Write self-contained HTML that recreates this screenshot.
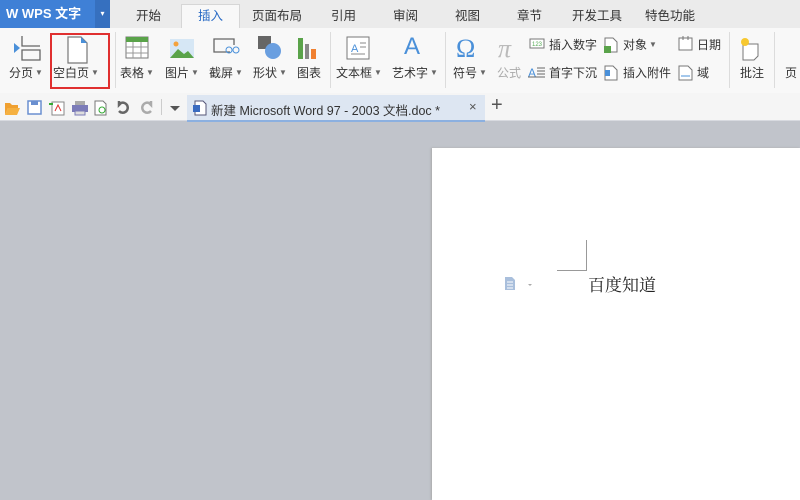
<!DOCTYPE html>
<html><head><meta charset="utf-8"><style>
*{margin:0;padding:0;box-sizing:border-box}
body{width:800px;height:500px;overflow:hidden;background:#c1c4cb;font-family:"Liberation Sans","Noto Sans CJK SC",sans-serif;font-size:12px;color:#333;position:relative}
.a{position:absolute;white-space:nowrap}
#tabs{left:0;top:0;width:800px;height:28px;background:#ebebeb}
#wps{left:0;top:0;width:95px;height:28px;background:#3f80d6;color:#fff;font-weight:bold;font-size:13px;line-height:28px;padding-left:6px}
#wpsa{left:95px;top:0;width:15px;height:28px;background:#3670bf;color:#fff;font-size:8px;line-height:28px;text-align:center}
.tab{top:0;height:28px;line-height:32px;font-size:12.5px;color:#333}
#ribbon{left:0;top:28px;width:800px;height:65px;background:#f8f8f8}
#qbar{left:0;top:93px;width:800px;height:28px;background:#f5f5f5;border-bottom:1px solid #d8dae0}
.lbl{top:64px;font-size:12px;color:#333}
i{font-style:normal;font-size:8px;color:#666;vertical-align:2px;margin-left:2px}
</style></head><body>
<div class="a" id="tabs"></div>
<div class="a" id="wps">W WPS 文字</div><div class="a" id="wpsa">▾</div>
<div class="a" style="left:181px;top:4px;width:59px;height:26px;background:#f8f8f8;border:1px solid #d6d6d6;border-bottom:none"></div>
<div class="a tab" style="left:136px">开始</div>
<div class="a tab" style="left:198px;color:#2a6bc5">插入</div>
<div class="a tab" style="left:252px">页面布局</div>
<div class="a tab" style="left:331px">引用</div>
<div class="a tab" style="left:393px">审阅</div>
<div class="a tab" style="left:455px">视图</div>
<div class="a tab" style="left:517px">章节</div>
<div class="a tab" style="left:572px">开发工具</div>
<div class="a tab" style="left:645px">特色功能</div>
<div class="a" id="ribbon"></div>
<svg class="a" style="left:0;top:28px" width="800" height="65">
<g fill="none" stroke="#666" stroke-width="1.3"><path d="M22 8v10h18M22 22h18v10H22z"/></g><path d="M14 15l6 5-6 5z" fill="#4a90d9"/>
<path d="M68 9h13l6 6v20H68z" fill="#fff" stroke="#777" stroke-width="1.2"/><path d="M81 9l6 6h-6z" fill="#4a90d9"/>
<rect x="126" y="9" width="22" height="21" fill="#fff" stroke="#777"/><rect x="126" y="9" width="22" height="5" fill="#5aa34a"/><path d="M126 19h22M126 25h22M133 14v16M141 14v16" stroke="#999"/>
<rect x="170" y="11" width="24" height="19" fill="#d6e7f5"/><path d="M170 30l8-9 6 5 4-3 6 7z" fill="#5aa34a"/><circle cx="176" cy="16" r="2.5" fill="#f4a23c"/>
<path d="M230 24h-16v-13h20v6" fill="none" stroke="#666" stroke-width="1.3"/><circle cx="229" cy="22" r="3" fill="none" stroke="#4a90d9"/><circle cx="236" cy="22" r="3" fill="none" stroke="#4a90d9"/>
<rect x="258" y="8" width="13" height="13" fill="#666"/><circle cx="273" cy="23" r="8" fill="#6a9fe0"/>
<rect x="298" y="10" width="5" height="21" fill="#5aa34a"/><rect x="305" y="16" width="4" height="15" fill="#888"/><rect x="311" y="21" width="5" height="10" fill="#f08030"/>
<rect x="347" y="9" width="22" height="22" fill="#fff" stroke="#777"/><text x="351" y="24" font-size="11" fill="#4a90d9" font-family="Liberation Sans">A</text><path d="M360 15h6M360 19h6M351 26h14" stroke="#888"/>
<text x="404" y="26" font-size="24" fill="#4a90d9" font-family="Liberation Sans">A</text>
<text x="456" y="29" font-size="26" fill="#4a90d9" font-family="Liberation Serif">Ω</text>
<text x="498" y="29" font-size="26" fill="#bbb" font-family="Liberation Serif" font-style="italic">π</text>
<rect x="530" y="11" width="14" height="9" fill="#fff" stroke="#777"/><text x="532" y="18" font-size="6" fill="#5a5">123</text>
<text x="528" y="49" font-size="12" fill="#4a90d9" font-family="Liberation Sans">A</text><path d="M537 40h8M537 43h8M537 46h8M528 49h17" stroke="#666"/>
<path d="M605 10h8l4 4v10h-12z" fill="#fff" stroke="#777"/><rect x="604" y="18" width="7" height="7" fill="#5aa34a"/>
<path d="M605 38h8l4 4v10h-12z" fill="#fff" stroke="#777"/><rect x="605" y="42" width="5" height="6" fill="#4a90d9"/>
<rect x="679" y="10" width="13" height="12" fill="#fff" stroke="#777"/><path d="M683 8v4M688 8v4" stroke="#777"/>
<path d="M679 38h9l4 4v10h-13z" fill="#fff" stroke="#777"/><path d="M681 48h9" stroke="#4a90d9"/>
<path d="M743 16h15v12l-4 4h-11z" fill="#fff" stroke="#777"/><circle cx="745" cy="14" r="4" fill="#f7c830"/>
<g fill="#dcdcdc"><rect x="115" y="4" width="1" height="56"/><rect x="330" y="4" width="1" height="56"/><rect x="445" y="4" width="1" height="56"/><rect x="729" y="4" width="1" height="56"/><rect x="774" y="4" width="1" height="56"/></g>
</svg>
<div class="a lbl" style="left:9px">分页<i>▼</i></div>
<div class="a lbl" style="left:53px">空白页<i>▼</i></div>
<div class="a" style="left:50px;top:33px;width:60px;height:56px;border:2px solid #e03030"></div>
<div class="a lbl" style="left:120px">表格<i>▼</i></div>
<div class="a lbl" style="left:165px">图片<i>▼</i></div>
<div class="a lbl" style="left:209px">截屏<i>▼</i></div>
<div class="a lbl" style="left:253px">形状<i>▼</i></div>
<div class="a lbl" style="left:297px">图表</div>
<div class="a lbl" style="left:336px">文本框<i>▼</i></div>
<div class="a lbl" style="left:392px">艺术字<i>▼</i></div>
<div class="a lbl" style="left:453px">符号<i>▼</i></div>
<div class="a lbl" style="left:497px;color:#aaa">公式</div>
<div class="a" style="left:549px;top:36px">插入数字</div>
<div class="a" style="left:549px;top:64px">首字下沉</div>
<div class="a" style="left:623px;top:36px">对象<i>▼</i></div>
<div class="a" style="left:623px;top:64px">插入附件</div>
<div class="a" style="left:697px;top:36px">日期</div>
<div class="a" style="left:697px;top:64px">域</div>
<div class="a lbl" style="left:740px">批注</div>
<div class="a lbl" style="left:785px">页</div>
<div class="a" id="qbar"></div>
<svg class="a" style="left:0;top:93px" width="200" height="28">
<path d="M5 10h5l2 2h6v3H8l-3 7z" fill="#f0a030"/><path d="M8 15h12l-3 7H5z" fill="#f5b040"/>
<rect x="28" y="8" width="13" height="13" fill="#fff" stroke="#6a8fd0" stroke-width="1.5"/><rect x="31" y="8" width="7" height="4" fill="#6a8fd0"/>
<rect x="52" y="9" width="12" height="13" fill="#fff" stroke="#888"/><path d="M55 18l3-6 3 6" stroke="#e03030" fill="none"/><path d="M49 11h4" stroke="#3a3" stroke-width="2"/>
<rect x="72" y="12" width="16" height="7" fill="#7b7bb8"/><rect x="75" y="8" width="10" height="4" fill="#aaa"/><rect x="75" y="18" width="10" height="4" fill="#ddd" stroke="#7b7bb8"/>
<path d="M95 8h8l3 3v11H95z" fill="#fff" stroke="#777"/><circle cx="102" cy="17" r="3" fill="none" stroke="#3a3"/>
<path d="M119 18a5 5 0 1 0 2-8l-2 2v-4" fill="none" stroke="#666" stroke-width="2.5"/>
<path d="M151 18a5 5 0 1 1-2-8l2 2v-4" fill="none" stroke="#aaa" stroke-width="2.5"/>
<rect x="161" y="6" width="1" height="16" fill="#ccc"/>
<path d="M170 13h10l-5 5z" fill="#555"/>
</svg>
<div class="a" style="left:187px;top:95px;width:298px;height:27px;background:#dde6f2;border-bottom:2px solid #8cb0e0"></div>
<svg class="a" style="left:192px;top:100px" width="16" height="16"><path d="M3 1h8l3 3v11H3z" fill="#fff" stroke="#557"/><rect x="1" y="5" width="7" height="7" fill="#3a6bc0"/></svg>
<div class="a" style="left:211px;top:100px;font-size:12.5px;color:#333">新建 Microsoft Word 97 - 2003 文档.doc *</div>
<div class="a" style="left:469px;top:99px;font-size:13px;color:#555">×</div>
<div class="a" style="left:491px;top:94px;font-size:20px;color:#555">+</div>
<div class="a" style="left:432px;top:148px;width:368px;height:352px;background:#fff;box-shadow:-1px 0 2px #aaa"></div>
<div class="a" style="left:557px;top:240px;width:30px;height:31px;border-right:1px solid #999;border-bottom:1px solid #999"></div>
<svg class="a" style="left:504px;top:276px" width="30" height="16"><path d="M1 1h7l3 3v10H1z" fill="#a9bfdc"/><path d="M3 6h6M3 9h6M3 12h6" stroke="#fff"/><path d="M24 8h4l-2 2z" fill="#aaa"/></svg>
<div class="a" style="left:588px;top:271px;font-family:'Liberation Serif','Noto Serif CJK SC',serif;font-size:17px;color:#222">百度知道</div>
</body></html>
